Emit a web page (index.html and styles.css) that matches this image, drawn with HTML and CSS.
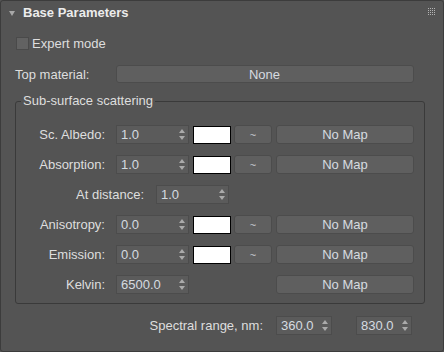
FILE: index.html
```html
<!DOCTYPE html>
<html lang="en">
<head>
    <meta charset="UTF-8">
    <title>Base Parameters</title>
    <link rel="stylesheet" href="styles.css">
</head>
<body>
    <div class="panel">
        <div class="header">
            <span class="caret"></span>
            <span class="title">Base Parameters</span>
            <svg class="grip" width="8" height="8" viewBox="0 0 8 8">
                <g fill="#b4b4b4">
                    <rect x="0" y="0" width="1" height="1"/><rect x="2" y="0" width="1" height="1"/><rect x="4" y="0" width="1" height="1"/><rect x="6" y="0" width="1" height="1"/>
                    <rect x="0" y="2" width="1" height="1"/><rect x="2" y="2" width="1" height="1"/><rect x="4" y="2" width="1" height="1"/><rect x="6" y="2" width="1" height="1"/>
                    <rect x="0" y="4" width="1" height="1"/><rect x="2" y="4" width="1" height="1"/><rect x="4" y="4" width="1" height="1"/><rect x="6" y="4" width="1" height="1"/>
                    <rect x="0" y="6" width="1" height="1"/><rect x="2" y="6" width="1" height="1"/><rect x="4" y="6" width="1" height="1"/><rect x="6" y="6" width="1" height="1"/>
                </g>
            </svg>
        </div>

        <div class="check-row">
            <span class="checkbox"></span>
            <span>Expert mode</span>
        </div>

        <div class="top-row">
            <span class="top-label">Top material:</span>
            <span class="btn wide">None</span>
        </div>

        <div class="group">
            <span class="group-title">Sub-surface scattering</span>

            <div class="row">
                <span class="label">Sc. Albedo:</span>
                <span class="spin">1.0<i class="arrows"></i></span>
                <span class="swatch"></span>
                <span class="btn tilde">~</span>
                <span class="btn map">No Map</span>
            </div>
            <div class="row">
                <span class="label">Absorption:</span>
                <span class="spin">1.0<i class="arrows"></i></span>
                <span class="swatch"></span>
                <span class="btn tilde">~</span>
                <span class="btn map">No Map</span>
            </div>
            <div class="row">
                <span class="label dist">At distance:</span>
                <span class="spin">1.0<i class="arrows"></i></span>
            </div>
            <div class="row">
                <span class="label">Anisotropy:</span>
                <span class="spin">0.0<i class="arrows"></i></span>
                <span class="swatch"></span>
                <span class="btn tilde">~</span>
                <span class="btn map">No Map</span>
            </div>
            <div class="row">
                <span class="label">Emission:</span>
                <span class="spin">0.0<i class="arrows"></i></span>
                <span class="swatch"></span>
                <span class="btn tilde">~</span>
                <span class="btn map">No Map</span>
            </div>
            <div class="row">
                <span class="label">Kelvin:</span>
                <span class="spin">6500.0<i class="arrows"></i></span>
                <span class="btn map push">No Map</span>
            </div>
        </div>

        <div class="range-row">
            <span class="range-label">Spectral range, nm:</span>
            <span class="spin short">360.0<i class="arrows"></i></span>
            <span class="spin short">830.0<i class="arrows"></i></span>
        </div>
    </div>
</body>
</html>
```

FILE: styles.css
```css
html, body { margin: 0; padding: 0; background: #545454; }
body { font-family: "Liberation Sans", Arial, sans-serif; font-size: 13px; color: #dedede; }

.panel { width: 444px; height: 352px; box-sizing: border-box; border: 1px solid #3c3c3c; border-radius: 3px; background: #545454; }

.header { display: flex; align-items: center; height: 23px; padding: 0 7px 0 8px; }
.caret { width: 0; height: 0; border-left: 3.5px solid transparent; border-right: 3.5px solid transparent; border-top: 5px solid #a8a8a8; margin-right: 8px; margin-top: 1px; }
.title { font-weight: bold; color: #ececec; }
.grip { margin-left: auto; margin-top: -1px; }

.check-row { display: flex; align-items: center; height: 13px; margin-top: 13px; padding-left: 15px; }
.checkbox { width: 11px; height: 11px; border: 1px solid #4a4a4a; background: #626262; margin-right: 3px; }

.top-row { display: flex; align-items: center; height: 18px; margin-top: 15px; padding-left: 14px; }
.top-label { width: 101px; }

.btn { display: flex; align-items: center; justify-content: center; box-sizing: border-box; height: 19px; border: 1px solid #4c4c4c; border-radius: 3px; background: #5f5f5f; color: #d6dbe0; }
.wide { width: 298px; height: 18px; padding-right: 1px; }
.tilde { width: 38px; margin-left: 3px; font-size: 11px; color: #c8ccd4; }
.map { width: 138px; margin-left: 4px; }
.push { margin-left: 87px; }

.group { position: relative; box-sizing: border-box; width: 410px; height: 203px; margin: 18px 0 0 14px; border: 1px solid #3a3a3a; border-radius: 3px; padding-top: 23px; }
.group-title { position: absolute; left: 5px; top: -9px; padding: 0 2px; background: #545454; line-height: 16px; }

.row { display: flex; align-items: center; height: 19px; margin-bottom: 11px; }
.label { width: 89px; margin-right: 11px; text-align: right; }
.label.dist { width: 128px; margin-right: 12px; }

.spin { position: relative; display: flex; align-items: center; box-sizing: border-box; width: 73px; height: 19px; padding-left: 4px; border: 1px solid #4c4c4c; background: #5b5b5b; color: #d6dbe0; }
.spin.short { width: 56px; }
.arrows { position: absolute; right: 2px; top: 2px; width: 8px; height: 13px; }
.arrows::before, .arrows::after { content: ""; position: absolute; left: 1px; width: 0; height: 0; border-left: 3px solid transparent; border-right: 3px solid transparent; }
.arrows::before { top: 1px; border-bottom: 4px solid #aaaaaa; }
.arrows::after { bottom: 1px; border-top: 4px solid #aaaaaa; }

.swatch { box-sizing: border-box; width: 38px; height: 18px; margin-left: 4px; border: 1px solid #000; background: #fff; }

.range-row { display: flex; align-items: center; justify-content: flex-end; height: 19px; margin-top: 12px; padding-right: 31px; }
.range-label { margin-right: 13px; }
.range-row .spin + .spin { margin-left: 24px; }
```
